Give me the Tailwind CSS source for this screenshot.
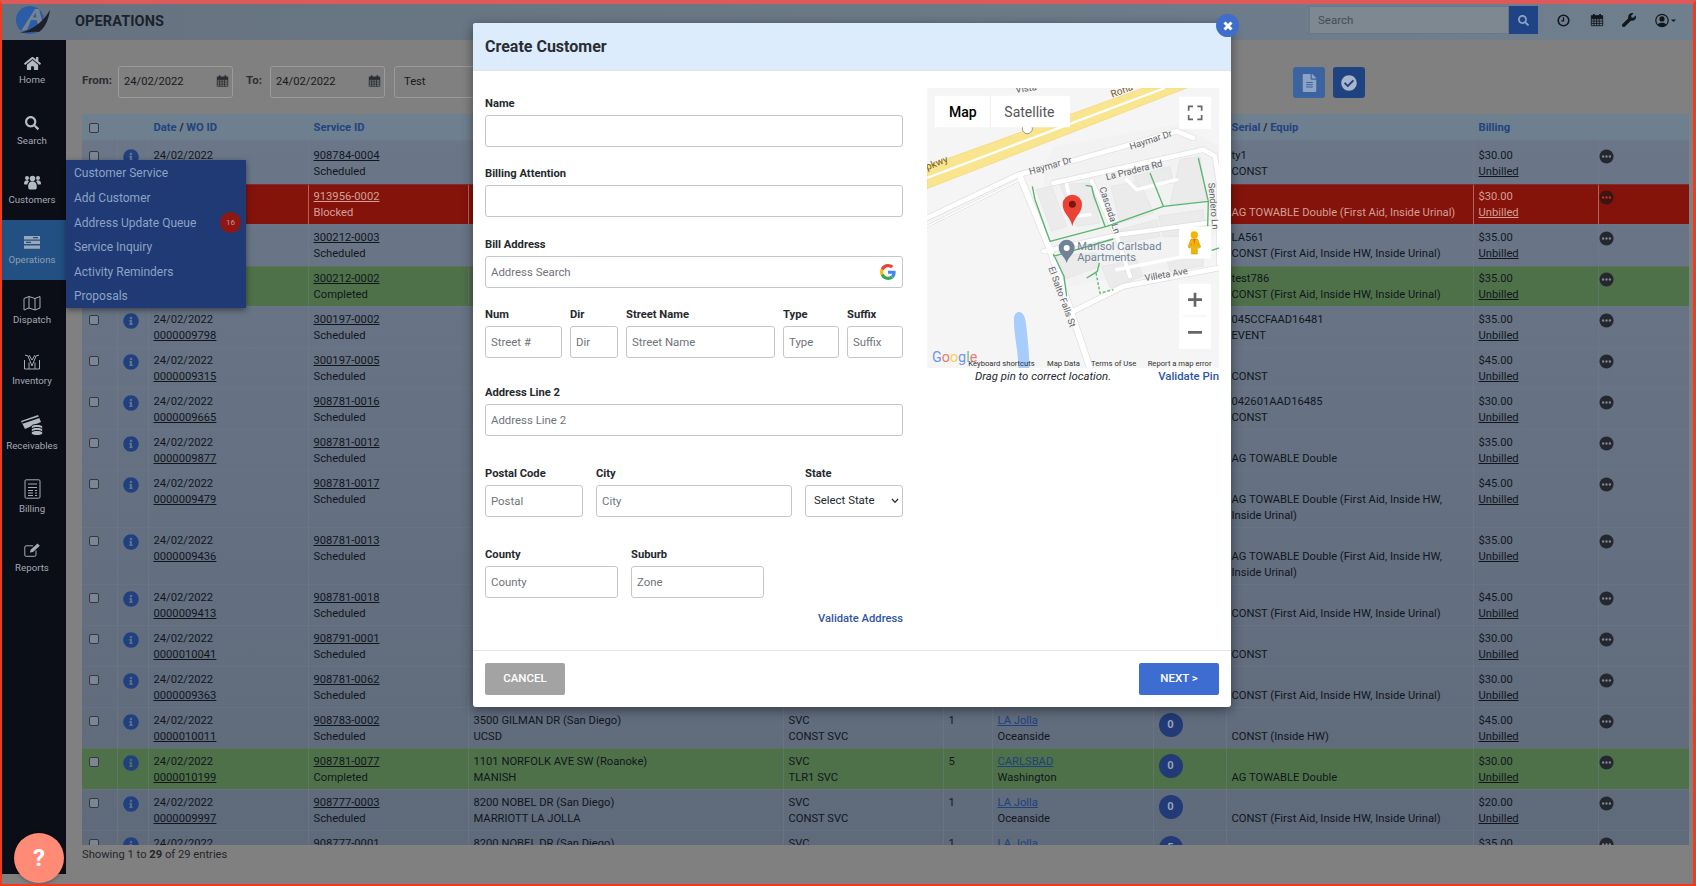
<!DOCTYPE html>
<html><head><meta charset="utf-8"><title>Operations</title>
<script src="https://cdn.jsdelivr.net/npm/@tailwindcss/browser@4"></script></head>
<body class="m-0">
<svg class="hidden"><defs>
<symbol id="i" viewBox="0 0 512 512"><path fill="currentColor" d="M256 8C119.043 8 8 119.083 8 256c0 136.997 111.043 248 248 248s248-111.003 248-248C504 119.083 392.957 8 256 8zm0 110c23.196 0 42 18.804 42 42s-18.804 42-42 42-42-18.804-42-42 18.804-42 42-42zm56 254c0 6.627-5.373 12-12 12h-88c-6.627 0-12-5.373-12-12v-24c0-6.627 5.373-12 12-12h12v-64h-12c-6.627 0-12-5.373-12-12v-24c0-6.627 5.373-12 12-12h64c6.627 0 12 5.373 12 12v100h12c6.627 0 12 5.373 12 12v24z"/></symbol>
<symbol id="d" viewBox="0 0 16 16"><circle cx="8" cy="8" r="7.5" fill="#24272d"/><circle cx="4.4" cy="8" r="1.25" fill="#7d8694"/><circle cx="8" cy="8" r="1.25" fill="#7d8694"/><circle cx="11.6" cy="8" r="1.25" fill="#7d8694"/></symbol>
<symbol id="dr" viewBox="0 0 16 16"><circle cx="8" cy="8" r="7.5" fill="#3a1512"/><circle cx="4.4" cy="8" r="1.25" fill="#d8261a"/><circle cx="8" cy="8" r="1.25" fill="#d8261a"/><circle cx="11.6" cy="8" r="1.25" fill="#d8261a"/></symbol>
<symbol id="cal" viewBox="0 0 16 16"><path fill="none" stroke="currentColor" d="M1.5 3h13v11.5h-13zM1.5 6.5h13M4.5 6.5v8M7.5 6.5v8M10.5 6.5v8M1.5 9.2h13M1.5 11.9h13"/><path fill="currentColor" d="M1.5 3h13v3.5h-13zM3.5 1h2v3h-2zM10.5 1h2v3h-2z"/></symbol>
</defs></svg>

<div class="relative w-[1696px] h-[886px] overflow-hidden bg-[#808080] border-l-2 border-r-[3px] border-b-2 border-t-4 border-l-[#f23a1c] border-r-[#f23a1c] border-b-[#f23a1c] border-t-[#dc5a5a] font-['Roboto',sans-serif] text-[11.2px] text-[#11161d]">

  <!-- top bar -->
  <header class="h-[36px] flex items-center bg-gradient-to-r from-[#66727f] to-[#707f8e]">
    <div class="w-[73px] h-[36px] pl-[11px] shrink-0 flex items-center">
      <svg width="40" height="32" viewBox="13 6 40 32"><circle cx="30" cy="20" r="14" fill="#2b5ca6"/><path d="M21 31L35 9 39 9 43 25 38 25 36.5 20 31 20 27 30Z" fill="#76838f"/><path d="M33 17.5L35.5 12.5 36.5 17.5Z" fill="#2b5ca6"/><path d="M15 33.5C28 33 42 24 50 10 48.5 20 45 28 39 32 34 31 24 33 15 33.5Z" fill="#1c2028"/></svg>
    </div>
    <h1 class="text-[14.5px] leading-[20px] font-bold tracking-[0.1px] text-[#1a222c]">OPERATIONS</h1>
    <div class="ml-auto flex items-center mb-[4px]">
      <div class="flex w-[229px] h-[28px]">
        <input class="w-[200px] h-[28px] px-[8px] text-[11.5px] bg-[#7d8890] border border-[#67788c] placeholder:text-[#454c55] outline-none" placeholder="Search">
        <button class="w-[29px] h-[28px] bg-[#1f4384] flex items-center justify-center"><svg width="11" height="11" viewBox="0 0 512 512"><path fill="#8fa3c2" d="M505 442.7L405.3 343c-4.5-4.5-10.6-7-17-7H372c27.6-35.3 44-79.7 44-128C416 93.1 322.9 0 208 0S0 93.1 0 208s93.1 208 208 208c48.3 0 92.7-16.4 128-44v16.3c0 6.4 2.5 12.5 7 17l99.7 99.7c9.4 9.4 24.6 9.4 33.9 0l28.3-28.3c9.4-9.4 9.4-24.6.1-34zM208 336c-70.7 0-128-57.2-128-128 0-70.7 57.2-128 128-128 70.7 0 128 57.2 128 128 0 70.7-57.2 128-128 128z"/></svg></button>
      </div>
      <svg class="ml-[19px]" width="13" height="13" viewBox="0 0 14 14"><circle cx="7" cy="7" r="5.7" fill="none" stroke="#12171e" stroke-width="1.7"/><path d="M7 3.5V7.5H4.5" fill="none" stroke="#12171e" stroke-width="1.4"/></svg>
      <svg class="ml-[20px] text-[#12171e]" width="14" height="14"><use href="#cal"/></svg>
      <svg class="ml-[18px]" width="14" height="14" viewBox="0 0 512 512"><path fill="#12171e" d="M507.73 109.1c-2.24-9.03-13.54-12.09-20.12-5.51l-74.36 74.36-67.88-11.31-11.31-67.88 74.36-74.36c6.62-6.62 3.43-17.9-5.66-20.16-47.38-11.74-99.55.91-136.58 37.93-39.64 39.64-50.55 97.1-34.05 147.2L18.74 402.76c-24.99 24.99-24.99 65.51 0 90.5 24.99 24.99 65.51 24.99 90.5 0l213.21-213.21c50.12 16.71 107.47 5.68 147.37-34.22 37.07-37.07 49.7-89.32 37.91-136.73z"/></svg>
      <svg class="ml-[19px] mr-[16px]" width="22" height="15" viewBox="0 0 22 14"><circle cx="7" cy="7" r="6.2" fill="none" stroke="#12171e" stroke-width="1.2"/><circle cx="7" cy="5.4" r="2.6" fill="#12171e"/><path d="M2.8 11.3C4 8.7 10 8.7 11.2 11.3 9 13.6 5 13.6 2.8 11.3Z" fill="#12171e"/><path d="M16 6h5l-2.5 2.6z" fill="#12171e"/></svg>
    </div>
  </header>

  <div class="flex h-[844px]">
    <!-- sidebar -->
    <aside class="w-[64px] h-[834px] shrink-0 bg-[#0b0d17] text-[#a3aab3] text-[9.7px] leading-[14px] text-center">
      <div class="h-[60px] pt-[16px] pr-[4px] flex flex-col items-center">
        <svg width="17" height="15" viewBox="0 0 576 512"><path fill="#b4bac2" d="M280.37 148.26L96 300.11V464a16 16 0 0 0 16 16l112.06-.29a16 16 0 0 0 15.92-16V368a16 16 0 0 1 16-16h64a16 16 0 0 1 16 16v95.64a16 16 0 0 0 16 16.05L464 480a16 16 0 0 0 16-16V300L295.67 148.26a12.19 12.19 0 0 0-15.3 0zM571.6 251.47L488 182.56V44.05a12 12 0 0 0-12-12h-56a12 12 0 0 0-12 12v72.61L318.47 43a48 48 0 0 0-61 0L4.34 251.47a12 12 0 0 0-1.6 16.9l25.5 31A12 12 0 0 0 45.15 301l235.22-193.74a12.19 12.19 0 0 1 15.3 0L530.9 301a12 12 0 0 0 16.9-1.6l25.5-31a12 12 0 0 0-1.7-16.93z"/></svg>
        <span class="mt-[2px]">Home</span>
      </div>
      <div class="h-[60px] pt-[16px] pr-[4px] flex flex-col items-center">
        <svg width="14" height="14" viewBox="0 0 512 512"><path fill="#b4bac2" d="M505 442.7L405.3 343c-4.5-4.5-10.6-7-17-7H372c27.6-35.3 44-79.7 44-128C416 93.1 322.9 0 208 0S0 93.1 0 208s93.1 208 208 208c48.3 0 92.7-16.4 128-44v16.3c0 6.4 2.5 12.5 7 17l99.7 99.7c9.4 9.4 24.6 9.4 33.9 0l28.3-28.3c9.4-9.4 9.4-24.6.1-34zM208 336c-70.7 0-128-57.2-128-128 0-70.7 57.2-128 128-128 70.7 0 128 57.2 128 128 0 70.7-57.2 128-128 128z"/></svg>
        <span class="mt-[4px]">Search</span>
      </div>
      <div class="h-[60px] pt-[15px] pr-[4px] flex flex-col items-center">
        <svg width="17" height="15" viewBox="0 0 17 15" fill="#b4bac2"><circle cx="3" cy="3" r="2"/><circle cx="14" cy="3" r="2"/><circle cx="8.5" cy="3.5" r="2.8"/><path d="M0 9c0-3 1.5-3.7 3-3.7 1 0 1.5.5 2 1C4 7.3 3.5 8.3 3.3 9.5H.6zM17 9c0-3-1.5-3.7-3-3.7-1 0-1.5.5-2 1 1 1 1.5 2 1.7 3.2h2.7zM4.2 12.5c0-4.5 1.5-5.9 4.3-5.9s4.3 1.4 4.3 5.9c0 1.5-1.2 2-2 2H6.2c-.8 0-2-.5-2-2z"/></svg>
        <span class="mt-[3px]">Customers</span>
      </div>
      <div class="h-[60px] pt-[16px] pr-[4px] bg-[#225083] text-[#8f9fb4] flex flex-col items-center">
        <svg width="16" height="13" viewBox="0 0 16 13" fill="#9aa7b8"><path d="M0 0h16v3.4H0zM0 4.7h16v3.4H0zM0 9.4h16v3.4H0z"/><path d="M9 1h5v1.2H9zM2 5.8h5V7H2z" fill="#225083"/></svg>
        <span class="mt-[4px]">Operations</span>
      </div>
      <div class="h-[60px] pt-[15px] pr-[4px] flex flex-col items-center">
        <svg width="18" height="16" viewBox="0 0 18 16" fill="none" stroke="#a5acb5" stroke-width="1"><path d="M1 3.5L6 1.5 12 3.5 17 1.5V13L12 15 6 13 1 15zM6 1.5V13M12 3.5V15"/></svg>
        <span class="mt-[2px]">Dispatch</span>
      </div>
      <div class="h-[60px] pt-[14px] pr-[4px] flex flex-col items-center">
        <svg width="18" height="16" viewBox="0 0 18 16" fill="none" stroke="#a5acb5" stroke-width="1"><path d="M1.5 6v9h15V6M6 8.5V15M12 8.5V15M9 12L5 2 2 1M9 12l4-10 3-1M9 6L6 1M9 6l3-5"/></svg>
        <span class="mt-[4px]">Inventory</span>
      </div>
      <div class="h-[65px] pt-[15px] pr-[4px] flex flex-col items-center">
        <svg width="23" height="21" viewBox="0 0 23 21"><path d="M0 6L17 0 20 7 4 14z" fill="#b4bac2"/><path d="M1 7L18 1.5 18.6 3 1.6 8.8z" fill="#0b0d17"/><ellipse cx="16" cy="12" rx="6" ry="2.6" fill="#b4bac2" stroke="#0b0d17"/><ellipse cx="16" cy="15" rx="6" ry="2.6" fill="#b4bac2" stroke="#0b0d17"/><ellipse cx="16" cy="18" rx="6" ry="2.6" fill="#b4bac2" stroke="#0b0d17"/></svg>
        <span class="mt-[3px]">Receivables</span>
      </div>
      <div class="h-[62px] pt-[14px] pr-[4px] flex flex-col items-center">
        <svg width="17" height="20" viewBox="0 0 17 20" fill="none" stroke="#a5acb5"><rect x="1" y=".8" width="15" height="18.4" rx="1.2"/><path d="M4 5h9M4 8.5h9M4 11.5h5M11 11.5h2M4 14h5M11 14h2M4 16.5h5M11 16.5h2"/></svg>
        <span class="mt-[3px]">Billing</span>
      </div>
      <div class="h-[63px] pt-[16px] pr-[4px] flex flex-col items-center">
        <svg width="17" height="14" viewBox="0 0 17 14" fill="none" stroke="#a5acb5"><path d="M12 7.5V12a1.3 1.3 0 0 1-1.3 1.3H2A1.3 1.3 0 0 1 .8 12V4A1.3 1.3 0 0 1 2 2.8h7"/><path d="M6 9.5l.6-2.8L13.5.5l2.4 2.3-6.9 6.2z" fill="#a5acb5" stroke="none"/></svg>
        <span class="mt-[4px]">Reports</span>
      </div>
    </aside>

    <!-- main -->
    <main class="w-[1627px] pl-[16px] pt-[26px]">
      <div class="flex items-center h-[32px] mb-[16px] text-[11.5px]">
        <b class="w-[36px] pb-[2px] text-[#2b2f35] font-bold">From:</b>
        <div class="w-[115px] h-[32px] pl-[5px] pr-[3px] flex items-center justify-between border border-[#9b9b9b] rounded-[3px] text-[#16191e] text-[11.2px]"><span class="pt-[1px]">24/02/2022</span><svg class="text-[#2a2d33] mb-[2px]" width="13" height="14"><use href="#cal"/></svg></div>
        <b class="ml-[13px] w-[24px] pb-[2px] text-[#2b2f35] font-bold">To:</b>
        <div class="w-[115px] h-[32px] pl-[5px] pr-[3px] flex items-center justify-between border border-[#9b9b9b] rounded-[3px] text-[#16191e] text-[11.2px]"><span class="pt-[1px]">24/02/2022</span><svg class="text-[#2a2d33] mb-[2px]" width="13" height="14"><use href="#cal"/></svg></div>
        <div class="ml-[9px] w-[206px] h-[32px] px-[9px] pt-[1px] flex items-center border border-[#9b9b9b] rounded-[3px] text-[#16191e] text-[11.2px]">Test</div>
        <div class="ml-[693px] self-end w-[32px] h-[31px] rounded-[3px] bg-[#3a639f] flex items-center justify-center"><svg width="15" height="18" viewBox="0 0 384 512"><path fill="#8fa3c4" d="M224 136V0H24C10.7 0 0 10.7 0 24v464c0 13.3 10.7 24 24 24h336c13.3 0 24-10.7 24-24V160H248c-13.2 0-24-10.8-24-24zm64 236c0 6.6-5.4 12-12 12H108c-6.6 0-12-5.4-12-12v-8c0-6.6 5.4-12 12-12h168c6.6 0 12 5.4 12 12v8zm0-64c0 6.6-5.4 12-12 12H108c-6.6 0-12-5.4-12-12v-8c0-6.6 5.4-12 12-12h168c6.6 0 12 5.4 12 12v8zm0-72v8c0 6.6-5.4 12-12 12H108c-6.6 0-12-5.4-12-12v-8c0-6.6 5.4-12 12-12h168c6.6 0 12 5.4 12 12zm96-114.1v6.1H256V0h6.1c6.4 0 12.5 2.5 17 7l97.9 98c4.5 4.5 7 10.6 7 16.9z"/></svg></div>
        <div class="ml-[8px] self-end w-[32px] h-[31px] rounded-[3px] bg-[#1f4380] flex items-center justify-center"><svg width="16" height="16" viewBox="0 0 512 512"><path fill="#a8b6cc" d="M504 256c0 136.967-111.033 248-248 248S8 392.967 8 256 119.033 8 256 8s248 111.033 248 248zM227.314 387.314l184-184c6.248-6.248 6.248-16.379 0-22.627l-22.627-22.627c-6.248-6.249-16.379-6.249-22.628 0L216 308.118l-70.059-70.059c-6.248-6.248-16.379-6.248-22.628 0l-22.627 22.627c-6.248 6.248-6.248 16.379 0 22.627l104 104c6.249 6.249 16.379 6.249 22.628.001z"/></svg></div>
      </div>

      <div class="w-[1607px] h-[731px] overflow-hidden bg-gradient-to-b from-[#6b7788] to-[#5f6a7b]">
        <table class="table-fixed border-collapse w-[1607px] [&_td]:align-top [&_td]:px-[5px] [&_td]:leading-[16px] [&_td]:border-l [&_td]:border-[#75808f]/40 [&_td:first-child]:border-l-0 [&_td:first-child]:pl-[7px] [&_tr]:border-b [&_tr]:border-[#75808f]/25 [&_.cb]:block [&_.cb]:appearance-none [&_.cb]:w-[10px] [&_.cb]:h-[10px] [&_.cb]:mt-[3px] [&_.cb]:bg-[#7c8692] [&_.cb]:border [&_.cb]:border-[#34383f] [&_.cb]:rounded-[2px] [&_a]:underline [&_.ic]:w-[16px] [&_.ic]:h-[16px] [&_.ic]:text-[#20407f] [&_.ic]:mt-[1px] [&_.dt]:w-[15px] [&_.dt]:h-[15px] [&_.dt]:-ml-[5px] [&_.dt]:mt-[1px]">
          <colgroup><col class="w-[35px]"><col class="w-[31px]"><col class="w-[160px]"><col class="w-[160px]"><col class="w-[315px]"><col class="w-[160px]"><col class="w-[49px]"><col class="w-[161px]"><col class="w-[73px]"><col class="w-[247px]"><col class="w-[125px]"><col class="w-[91px]"></colgroup>
          <thead><tr class="h-[26px] bg-[#6e7f8f] font-bold text-[#23437f] [&>td]:pt-[6px]"><td><input type="checkbox" class="cb"></td><td></td><td>Date <span class="text-[#1b2530]">/</span> WO ID</td><td>Service ID</td><td>Address</td><td>Type</td><td>Qty</td><td>City</td><td></td><td>Serial <span class="text-[#1b2530]">/</span> Equip</td><td>Billing</td><td></td></tr></thead>
          <tbody>
            <tr class="h-[44px] [&>td]:pt-[7px]"><td><input type="checkbox" class="cb"></td><td><svg class="ic"><use href="#i"/></svg></td><td>24/02/2022<br><a>0000009811</a></td><td><a>908784-0004</a><br>Scheduled</td><td></td><td></td><td></td><td></td><td></td><td>ty1<br>CONST</td><td>$30.00<br><a>Unbilled</a></td><td><svg class="dt"><use href="#d"/></svg></td></tr>
            <tr class="h-[40px] bg-[#84130b] text-[#d3a097] [&>td]:pt-[4px] [&>td]:border-[#b5625a]"><td></td><td></td><td></td><td><a>913956-0002</a><br>Blocked</td><td></td><td></td><td></td><td></td><td></td><td><br>AG TOWABLE Double (First Aid, Inside Urinal)</td><td>$30.00<br><a>Unbilled</a></td><td><svg class="dt"><use href="#dr"/></svg></td></tr>
            <tr class="h-[42px] [&>td]:pt-[5px]"><td></td><td></td><td></td><td><a>300212-0003</a><br>Scheduled</td><td></td><td></td><td></td><td></td><td></td><td>LA561<br>CONST (First Aid, Inside HW, Inside Urinal)</td><td>$35.00<br><a>Unbilled</a></td><td><svg class="dt"><use href="#d"/></svg></td></tr>
            <tr class="h-[40px] bg-[#4f7149] [&>td]:pt-[4px]"><td></td><td></td><td></td><td><a>300212-0002</a><br>Completed</td><td></td><td></td><td></td><td></td><td></td><td>test786<br>CONST (First Aid, Inside HW, Inside Urinal)</td><td>$35.00<br><a>Unbilled</a></td><td><svg class="dt"><use href="#d"/></svg></td></tr>
            <tr class="h-[41px] [&>td]:pt-[5px]"><td><input type="checkbox" class="cb"></td><td><svg class="ic"><use href="#i"/></svg></td><td>24/02/2022<br><a>0000009798</a></td><td><a>300197-0002</a><br>Scheduled</td><td></td><td></td><td></td><td></td><td></td><td>045CCFAAD16481<br>EVENT</td><td>$35.00<br><a>Unbilled</a></td><td><svg class="dt"><use href="#d"/></svg></td></tr>
            <tr class="h-[41px] [&>td]:pt-[5px]"><td><input type="checkbox" class="cb"></td><td><svg class="ic"><use href="#i"/></svg></td><td>24/02/2022<br><a>0000009315</a></td><td><a>300197-0005</a><br>Scheduled</td><td></td><td></td><td></td><td></td><td></td><td><br>CONST</td><td>$45.00<br><a>Unbilled</a></td><td><svg class="dt"><use href="#d"/></svg></td></tr>
            <tr class="h-[41px] [&>td]:pt-[5px]"><td><input type="checkbox" class="cb"></td><td><svg class="ic"><use href="#i"/></svg></td><td>24/02/2022<br><a>0000009665</a></td><td><a>908781-0016</a><br>Scheduled</td><td></td><td></td><td></td><td></td><td></td><td>042601AAD16485<br>CONST</td><td>$30.00<br><a>Unbilled</a></td><td><svg class="dt"><use href="#d"/></svg></td></tr>
            <tr class="h-[41px] [&>td]:pt-[5px]"><td><input type="checkbox" class="cb"></td><td><svg class="ic"><use href="#i"/></svg></td><td>24/02/2022<br><a>0000009877</a></td><td><a>908781-0012</a><br>Scheduled</td><td></td><td></td><td></td><td></td><td></td><td><br>AG TOWABLE Double</td><td>$35.00<br><a>Unbilled</a></td><td><svg class="dt"><use href="#d"/></svg></td></tr>
            <tr class="h-[57px] [&>td]:pt-[5px]"><td><input type="checkbox" class="cb"></td><td><svg class="ic"><use href="#i"/></svg></td><td>24/02/2022<br><a>0000009479</a></td><td><a>908781-0017</a><br>Scheduled</td><td></td><td></td><td></td><td></td><td></td><td><br>AG TOWABLE Double (First Aid, Inside HW, Inside Urinal)</td><td>$45.00<br><a>Unbilled</a></td><td><svg class="dt"><use href="#d"/></svg></td></tr>
            <tr class="h-[57px] [&>td]:pt-[5px]"><td><input type="checkbox" class="cb"></td><td><svg class="ic"><use href="#i"/></svg></td><td>24/02/2022<br><a>0000009436</a></td><td><a>908781-0013</a><br>Scheduled</td><td></td><td></td><td></td><td></td><td></td><td><br>AG TOWABLE Double (First Aid, Inside HW, Inside Urinal)</td><td>$35.00<br><a>Unbilled</a></td><td><svg class="dt"><use href="#d"/></svg></td></tr>
            <tr class="h-[41px] [&>td]:pt-[5px]"><td><input type="checkbox" class="cb"></td><td><svg class="ic"><use href="#i"/></svg></td><td>24/02/2022<br><a>0000009413</a></td><td><a>908781-0018</a><br>Scheduled</td><td></td><td></td><td></td><td></td><td></td><td><br>CONST (First Aid, Inside HW, Inside Urinal)</td><td>$45.00<br><a>Unbilled</a></td><td><svg class="dt"><use href="#d"/></svg></td></tr>
            <tr class="h-[41px] [&>td]:pt-[5px]"><td><input type="checkbox" class="cb"></td><td><svg class="ic"><use href="#i"/></svg></td><td>24/02/2022<br><a>0000010041</a></td><td><a>908791-0001</a><br>Scheduled</td><td></td><td></td><td></td><td></td><td></td><td><br>CONST</td><td>$30.00<br><a>Unbilled</a></td><td><svg class="dt"><use href="#d"/></svg></td></tr>
            <tr class="h-[41px] [&>td]:pt-[5px]"><td><input type="checkbox" class="cb"></td><td><svg class="ic"><use href="#i"/></svg></td><td>24/02/2022<br><a>0000009363</a></td><td><a>908781-0062</a><br>Scheduled</td><td></td><td></td><td></td><td></td><td></td><td><br>CONST (First Aid, Inside HW, Inside Urinal)</td><td>$30.00<br><a>Unbilled</a></td><td><svg class="dt"><use href="#d"/></svg></td></tr>
            <tr class="h-[41px] [&>td]:pt-[5px]"><td><input type="checkbox" class="cb"></td><td><svg class="ic"><use href="#i"/></svg></td><td>24/02/2022<br><a>0000010011</a></td><td><a>908783-0002</a><br>Scheduled</td><td>3500 GILMAN DR (San Diego)<br>UCSD</td><td>SVC<br>CONST SVC</td><td>1</td><td><a class="text-[#20407f]">LA Jolla</a><br>Oceanside</td><td><span class="flex items-center justify-center w-[24px] h-[24px] rounded-full bg-[#223a75] text-[#97a3ba] font-bold">0</span></td><td><br>CONST (Inside HW)</td><td>$45.00<br><a>Unbilled</a></td><td><svg class="dt"><use href="#d"/></svg></td></tr>
            <tr class="h-[41px] bg-[#4f7149] [&>td]:pt-[5px]"><td><input type="checkbox" class="cb"></td><td><svg class="ic"><use href="#i"/></svg></td><td>24/02/2022<br><a>0000010199</a></td><td><a>908781-0077</a><br>Completed</td><td>1101 NORFOLK AVE SW (Roanoke)<br>MANISH</td><td>SVC<br>TLR1 SVC</td><td>5</td><td><a class="text-[#20407f]">CARLSBAD</a><br>Washington</td><td><span class="flex items-center justify-center w-[24px] h-[24px] rounded-full bg-[#223a75] text-[#97a3ba] font-bold">0</span></td><td><br>AG TOWABLE Double</td><td>$30.00<br><a>Unbilled</a></td><td><svg class="dt"><use href="#d"/></svg></td></tr>
            <tr class="h-[41px] [&>td]:pt-[5px]"><td><input type="checkbox" class="cb"></td><td><svg class="ic"><use href="#i"/></svg></td><td>24/02/2022<br><a>0000009997</a></td><td><a>908777-0003</a><br>Scheduled</td><td>8200 NOBEL DR (San Diego)<br>MARRIOTT LA JOLLA</td><td>SVC<br>CONST SVC</td><td>1</td><td><a class="text-[#20407f]">LA Jolla</a><br>Oceanside</td><td><span class="flex items-center justify-center w-[24px] h-[24px] rounded-full bg-[#223a75] text-[#97a3ba] font-bold">0</span></td><td><br>CONST (First Aid, Inside HW, Inside Urinal)</td><td>$20.00<br><a>Unbilled</a></td><td><svg class="dt"><use href="#d"/></svg></td></tr>
            <tr class="h-[41px] [&>td]:pt-[5px]"><td><input type="checkbox" class="cb"></td><td><svg class="ic"><use href="#i"/></svg></td><td>24/02/2022<br><a>0000009998</a></td><td><a>908777-0001</a><br>Scheduled</td><td>8200 NOBEL DR (San Diego)<br>MARRIOTT LA JOLLA</td><td>SVC<br>CONST SVC</td><td>1</td><td><a class="text-[#20407f]">LA Jolla</a><br>Oceanside</td><td><span class="flex items-center justify-center w-[24px] h-[24px] rounded-full bg-[#223a75] text-[#97a3ba] font-bold">5</span></td><td></td><td>$35.00<br><a>Unbilled</a></td><td><svg class="dt"><use href="#d"/></svg></td></tr>
          </tbody>
        </table>
      </div>
      <p class="mt-[2px] leading-[16px] text-[#23272d]">Showing 1 to <b>29</b> of 29 entries</p>
    </main>
  </div>

  <!-- flyout menu -->
  <nav class="absolute left-[64px] top-[156px] w-[180px] h-[148px] bg-[#1f3a74] shadow-[0_2px_6px_rgba(0,0,0,0.45)] text-[#8ea3c4] text-[12px] pl-[8px] pt-[1px]">
    <div class="h-[24.7px] leading-[24.7px]">Customer Service</div>
    <div class="h-[24.7px] leading-[25.5px]">Add Customer</div>
    <div class="h-[24.7px] leading-[26px]">Address Update Queue</div>
    <div class="h-[24.7px] leading-[24.7px]">Service Inquiry</div>
    <div class="h-[24.7px] leading-[24.7px]">Activity Reminders</div>
    <div class="h-[24.7px] leading-[25.5px]">Proposals</div>
    <span class="absolute left-[154px] top-[52px] w-[21px] h-[21px] rounded-full bg-[#8f1713] text-[#c59a9a] text-[8px] flex items-center justify-center">16</span>
  </nav>

  <!-- help -->
  <div class="absolute left-[12px] top-[829px] w-[50px] h-[50px] rounded-full bg-[#ff8a75] shadow-[0_1px_4px_rgba(0,0,0,0.3)] flex items-center justify-center text-white text-[24px] font-bold">?</div>

  <!-- modal -->
  <section class="absolute left-[471px] top-[19px] w-[758px] h-[684px] bg-white rounded-[3px] shadow-[0_3px_12px_rgba(0,0,0,0.45)] flex flex-col text-[#25292e] [&_label]:block [&_label]:font-bold [&_label]:leading-[14px] [&_label]:mb-[4px] [&_input]:h-[32px] [&_input]:w-full [&_input]:px-[5px] [&_input]:border [&_input]:border-[#c4c8cc] [&_input]:rounded-[3px] [&_input]:outline-none [&_input]:placeholder:text-[#6f7479] [&_input]:text-[11.4px]">
    <div class="h-[48px] shrink-0 bg-[#dcecfd] border-b border-[#e2e4e8] px-[12px] flex items-center rounded-t-[3px]"><h2 class="text-[16px] font-bold text-[#2a2e33]">Create Customer</h2></div>
    <button class="absolute -right-[8px] -top-[9px] w-[23px] h-[23px] rounded-full bg-[#3e6dcb] flex items-center justify-center"><svg width="10" height="10" viewBox="0 0 10 10"><path d="M1.5 1.5l7 7M8.5 1.5l-7 7" stroke="#fff" stroke-width="3"/></svg></button>
    <div class="flex-1 flex gap-[24px] px-[12px] pt-[17px] items-start">
      <form class="w-[418px] pt-[9px]">
        <label>Name</label><input>
        <label class="mt-[20px]">Billing Attention</label><input>
        <label class="mt-[21px]">Bill Address</label>
        <div class="relative"><input placeholder="Address Search">
          <svg class="absolute right-[7px] top-[8px]" width="16" height="16" viewBox="0 0 48 48"><path fill="#EA4335" d="M24 9.5c3.5 0 6.7 1.2 9.2 3.6l6.9-6.9C35.9 2.4 30.5 0 24 0 14.6 0 6.5 5.4 2.6 13.2l8 6.2C12.4 13.7 17.7 9.5 24 9.5z"/><path fill="#4285F4" d="M46.98 24.55c0-1.57-.15-3.09-.38-4.55H24v9.02h12.94c-.58 2.96-2.26 5.48-4.78 7.18l7.73 6c4.51-4.18 7.09-10.36 7.09-17.65z"/><path fill="#FBBC05" d="M10.53 28.59c-.48-1.45-.76-2.99-.76-4.59s.27-3.14.76-4.59l-7.98-6.19C.92 16.46 0 20.12 0 24c0 3.88.92 7.54 2.56 10.78l7.97-6.19z"/><path fill="#34A853" d="M24 48c6.48 0 11.93-2.13 15.89-5.81l-7.73-6c-2.15 1.45-4.92 2.3-8.16 2.3-6.26 0-11.57-4.22-13.47-9.91l-7.98 6.19C6.51 42.62 14.62 48 24 48z"/></svg>
        </div>
        <div class="flex gap-[8px] mt-[20px]">
          <div class="w-[77px]"><label>Num</label><input placeholder="Street #"></div>
          <div class="w-[48px]"><label>Dir</label><input placeholder="Dir"></div>
          <div class="w-[149px]"><label>Street Name</label><input placeholder="Street Name"></div>
          <div class="w-[56px]"><label>Type</label><input placeholder="Type"></div>
          <div class="w-[56px]"><label>Suffix</label><input placeholder="Suffix"></div>
        </div>
        <label class="mt-[28px]">Address Line 2</label><input placeholder="Address Line 2">
        <div class="flex gap-[13px] mt-[31px]">
          <div class="w-[98px]"><label>Postal Code</label><input placeholder="Postal"></div>
          <div class="w-[196px]"><label>City</label><input placeholder="City"></div>
          <div class="w-[98px]"><label>State</label><div class="relative"><select class="block appearance-none w-full h-[32px] pl-[8px] border border-[#c4c8cc] rounded-[3px] bg-white text-[11.4px] text-[#25292e] outline-none"><option>Select State</option></select><svg class="absolute right-[4px] top-[13px]" width="8" height="6" viewBox="0 0 8 6"><path d="M1 1l3 3.4L7 1" fill="none" stroke="#25292e" stroke-width="1.2"/></svg></div></div>
        </div>
        <div class="flex gap-[13px] mt-[31px]">
          <div class="w-[133px]"><label>County</label><input placeholder="County"></div>
          <div class="w-[133px]"><label>Suburb</label><input placeholder="Zone"></div>
        </div>
        <div class="mt-[14px] text-right leading-[14px] font-medium text-[#2f55a6]">Validate Address</div>
      </form>
      <div class="w-[292px]">
        <svg class="block" width="292" height="280" viewBox="51 235 876 840" font-family="Roboto, sans-serif">
          <rect x="51" y="235" width="876" height="840" fill="#f5f5f5"/>
          <path d="M400 480L430 410 800 345 860 375 927 410V650L870 760 480 830 420 700Z" fill="#f2f2f2"/>
          <g fill="#ebebeb" stroke="#e2e2e2" stroke-width="2">
            <path d="M378 540L425 530 470 650 425 665Z"/><path d="M450 525L540 520 570 640 500 650Z"/><path d="M603 530L690 515 730 610 630 640Z"/><path d="M670 500L780 470 790 520 690 535Z"/><path d="M810 450L870 440 890 570 780 585Z"/><path d="M630 660L740 630 750 680 640 700Z"/><path d="M745 620L880 600 885 680 760 680Z"/><path d="M430 740L560 730 570 770 460 810Z"/><path d="M575 770L680 750 700 800 600 835Z"/><path d="M770 750L880 740 880 770 780 785Z"/>
          </g>
          <path d="M51 469L700 235H830L51 537Z" fill="#f9e58e" stroke="#f1d77c" stroke-width="2"/>
          <path d="M51 505L765 235" stroke="#fff" stroke-width="7"/>
          <g fill="none" stroke="#dedede" stroke-linecap="round">
            <path d="M51 625L325 495 500 450 800 365 850 385" stroke-width="18"/>
            <path d="M51 650L330 510" stroke-width="8"/>
            <path d="M330 500L420 720 540 1075" stroke-width="22"/>
            <path d="M430 520L880 420 915 440 927 520V760" stroke-width="18"/>
            <path d="M400 725L627 675 927 635" stroke-width="17"/>
            <path d="M490 905L640 830 927 775" stroke-width="19"/>
            <path d="M545 515L620 680 660 800" stroke-width="17"/>
          </g>
          <g fill="none" stroke="#fff" stroke-linecap="round">
            <path d="M51 625L325 495 500 450 800 365 850 385" stroke-width="14"/>
            <path d="M51 650L330 510" stroke-width="5"/>
            <path d="M330 500L420 720 540 1075" stroke-width="18"/>
            <path d="M430 520L880 420 915 440 927 520V760" stroke-width="14"/>
            <path d="M400 725L627 675 927 635" stroke-width="13"/>
            <path d="M490 905L640 830 927 775" stroke-width="15"/>
            <path d="M545 515L620 680 660 800" stroke-width="13"/>
            <path d="M470 525L490 620 540 615M650 510L680 540 800 510M620 780L900 725" stroke-width="10"/>
          </g>
          <g fill="none" stroke="#57b56f" stroke-width="4" stroke-linejoin="round">
            <path d="M367 530L375 570 420 695 590 650 760 590 895 575 893 650M527 527L545 530 552 560 585 650M720 490L760 590M865 445L895 575M430 733L462 800 470 860M430 740L610 688M568 760L562 785 530 805M905 722L927 715"/>
            <path d="M558 790L570 850 610 840" stroke-dasharray="8 6"/>
          </g>
          <path d="M312 925C315 900 340 900 346 930 352 970 358 1030 358 1075H325C325 1020 310 970 312 925Z" fill="#a6cdfb"/>
          <g fill="#5f6368" font-size="28">
            <text transform="translate(360 495) rotate(-16)">Haymar Dr</text>
            <text transform="translate(662 420) rotate(-18)">Haymar Dr</text>
            <text transform="translate(590 512) rotate(-14)">La Pradera Rd</text>
            <text transform="translate(568 535) rotate(72)">Cascada Ln</text>
            <text transform="translate(895 520) rotate(85)">Sendero Ln</text>
            <text transform="translate(706 815) rotate(-10)">Villeta Ave</text>
            <text transform="translate(415 775) rotate(70)">El Salto Falls St</text>
            <text transform="translate(318 250) rotate(-8)">Vista</text>
          </g>
          <text transform="translate(607 264) rotate(-21)" font-size="30" fill="#7a5b22">Rona</text>
          <text transform="translate(52 482) rotate(-22)" font-size="30" fill="#7a5b22">pkwy</text>
          <circle cx="352" cy="357" r="15" fill="#fff" stroke="#666" stroke-width="2"/>
          <path d="M470 690a24 24 0 0 1 24 24c0 18-18 26-24 46-6-20-24-28-24-46a24 24 0 0 1 24-24z" fill="#6f8296"/><circle cx="470" cy="715" r="9" fill="#fff"/>
          <text x="502" y="720" font-size="33.5" fill="#6f8296">Marisol Carlsbad</text><text x="502" y="754" font-size="33.5" fill="#6f8296">Apartments</text>
          <path d="M487 555a29 29 0 0 1 29 29c0 28-23 36-29 66-6-30-29-38-29-66a29 29 0 0 1 29-29z" fill="#ea4335"/><circle cx="487" cy="584" r="10.5" fill="#7d1510"/>
          <g fill="#fff"><rect x="75" y="258" width="405" height="95" rx="3"/><rect x="807" y="261" width="96" height="96"/><rect x="807" y="651" width="96" height="96"/><rect x="807" y="822" width="96" height="195"/></g>
          <path d="M241 258V353" stroke="#e6e6e6" stroke-width="2"/>
          <text x="117" y="321" font-size="42" font-weight="500" fill="#000">Map</text><text x="283" y="321" font-size="42" fill="#565656">Satellite</text>
          <path d="M836 303V290H849M862 290H875V303M875 316V329H862M849 329H836V316" fill="none" stroke="#666" stroke-width="5"/>
          <path d="M820 919H890" stroke="#e6e6e6" stroke-width="2"/>
          <path d="M834 870H876M855 849V891M834 968H876" stroke="#666" stroke-width="8"/>
          <circle cx="853" cy="676" r="11" fill="#f5b400"/><path d="M843 688H863L872 712 866 716 862 702V733H844V702L840 716 834 712Z" fill="#f5b400" stroke="#c58c00" stroke-width="1.5"/><path d="M850 688L853 705 856 688Z" fill="#e0662a"/>
          <text x="66" y="1056" font-size="43"><tspan fill="#6f93ee">G</tspan><tspan fill="#ee7a6c">o</tspan><tspan fill="#fbcf4f">o</tspan><tspan fill="#6f93ee">g</tspan><tspan fill="#6cc286">l</tspan><tspan fill="#ee7a6c">e</tspan></text>
          <g font-size="23" fill="#333"><text x="175" y="1070">Keyboard shortcuts</text><text x="411" y="1070">Map Data</text><text x="543" y="1070">Terms of Use</text><text x="713" y="1070">Report a map error</text></g>
        </svg>
        <div class="flex items-center h-[16px] pl-[48px] text-[11.4px] leading-[16px]"><i class="text-[#25292e]">Drag pin to correct location.</i><span class="ml-auto font-medium text-[#2f55a6]">Validate Pin</span></div>
      </div>
    </div>
    <div class="h-[57px] shrink-0 border-t border-[#e4e4e4] px-[12px] flex items-center justify-between">
      <button class="w-[80px] h-[32px] rounded-[2px] bg-[#a3a3a3] text-white font-medium text-[11.5px]">CANCEL</button>
      <button class="w-[80px] h-[32px] rounded-[2px] bg-[#3e6dd2] text-white font-medium text-[11.5px]">NEXT &gt;</button>
    </div>
  </section>
</div>
</body></html>
